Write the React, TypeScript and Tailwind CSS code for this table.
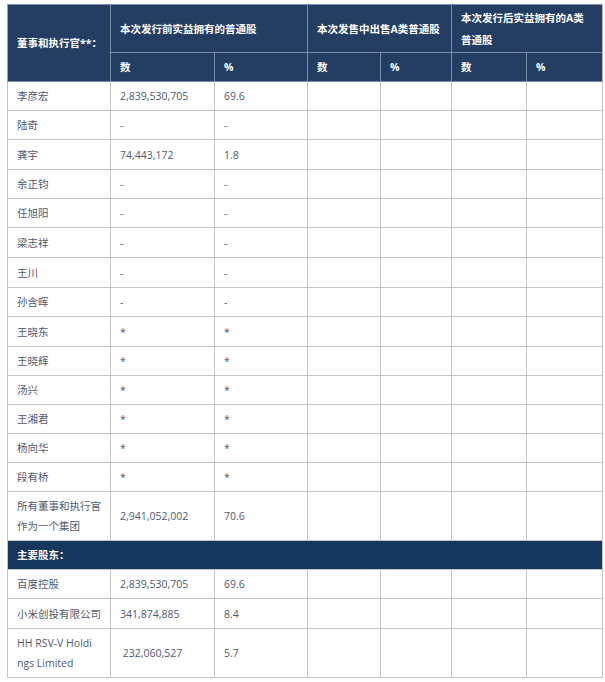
import React from 'react'

interface Row {
  name: React.ReactNode
  shares: string
  pct: string
  h: string
}

const directors: Row[] = [
  { name: '李彦宏', shares: '2,839,530,705', pct: '69.6', h: 'h-[29px]' },
  { name: '陆奇', shares: '-', pct: '-', h: 'h-[29px]' },
  { name: '龚宇', shares: '74,443,172', pct: '1.8', h: 'h-[30px]' },
  { name: '余正钧', shares: '-', pct: '-', h: 'h-[29px]' },
  { name: '任旭阳', shares: '-', pct: '-', h: 'h-[29px]' },
  { name: '梁志祥', shares: '-', pct: '-', h: 'h-[30px]' },
  { name: '王川', shares: '-', pct: '-', h: 'h-[30px]' },
  { name: '孙含晖', shares: '-', pct: '-', h: 'h-[29px]' },
  { name: '王晓东', shares: '*', pct: '*', h: 'h-[30px]' },
  { name: '王晓辉', shares: '*', pct: '*', h: 'h-[29px]' },
  { name: '汤兴', shares: '*', pct: '*', h: 'h-[29px]' },
  { name: '王湘君', shares: '*', pct: '*', h: 'h-[29px]' },
  { name: '杨向华', shares: '*', pct: '*', h: 'h-[29px]' },
  { name: '段有桥', shares: '*', pct: '*', h: 'h-[29px]' },
  {
    name: (
      <>
        所有董事和执行官
        <br />
        作为一个集团
      </>
    ),
    shares: '2,941,052,002',
    pct: '70.6',
    h: 'h-[49px]',
  },
]

const holders: Row[] = [
  { name: '百度控股', shares: '2,839,530,705', pct: '69.6', h: 'h-[29px]' },
  { name: '小米创投有限公司', shares: '341,874,885', pct: '8.4', h: 'h-[30px]' },
  {
    name: (
      <>
        HH RSV-V Holdi
        <br />
        ngs Limited
      </>
    ),
    shares: '\u00a0232,060,527',
    pct: '5.7',
    h: 'h-[49px]',
  },
]

const th =
  'border border-[#7d8ca6] pl-[9px] pr-0 py-0 text-left align-middle font-bold whitespace-nowrap text-white'
const td = 'border border-[#c4c4c4] pl-[9px] pr-0 py-0 align-middle whitespace-nowrap'

function BodyRow({ row }: { row: Row }) {
  return (
    <tr>
      <td className={`${td} ${row.h}`}>{row.name}</td>
      <td className={`${td} ${row.h}`}>{row.shares}</td>
      <td className={`${td} ${row.h}`}>{row.pct}</td>
      <td className={`${td} ${row.h}`}></td>
      <td className={`${td} ${row.h}`}></td>
      <td className={`${td} ${row.h}`}></td>
      <td className={`${td} ${row.h}`}></td>
    </tr>
  )
}

export default function App() {
  return (
    <div
      className="min-h-screen bg-white pt-[4px] pl-[7px] text-[10.5px] leading-[20px] text-[#4f5a70]"
      style={{ fontFamily: '"Open Sans", "Noto Sans CJK SC", sans-serif' }}
    >
      <table className="w-[595px] table-fixed border-collapse">
        <colgroup>
          <col className="w-[103px]" />
          <col className="w-[104px]" />
          <col className="w-[93px]" />
          <col className="w-[73px]" />
          <col className="w-[71px]" />
          <col className="w-[75px]" />
          <col className="w-[76px]" />
        </colgroup>
        <thead className="bg-[#243d62]">
          <tr>
            <th rowSpan={2} className={`${th} border-l-[#9aa3b0]`}>
              董事和执行官**：
            </th>
            <th colSpan={2} className={`${th} h-[48px]`}>
              本次发行前实益拥有的普通股
            </th>
            <th colSpan={2} className={th}>
              本次发售中出售A类普通股
            </th>
            <th colSpan={2} className={`${th} border-r-[#b8bcc4] leading-[22px]`}>
              本次发行后实益拥有的A类
              <br />
              普通股
            </th>
          </tr>
          <tr>
            <th className={`${th} h-[29px]`}>数</th>
            <th className={th}>%</th>
            <th className={th}>数</th>
            <th className={th}>%</th>
            <th className={th}>数</th>
            <th className={`${th} border-r-[#b8bcc4]`}>%</th>
          </tr>
        </thead>
        <tbody>
          {directors.map((row, i) => (
            <BodyRow key={i} row={row} />
          ))}
          <tr>
            <td
              colSpan={7}
              className="h-[29px] border border-[#c4c4c4] bg-[#17365d] pl-[9px] py-0 align-middle font-bold text-white"
            >
              主要股东：
            </td>
          </tr>
          {holders.map((row, i) => (
            <BodyRow key={i} row={row} />
          ))}
        </tbody>
      </table>
    </div>
  )
}
